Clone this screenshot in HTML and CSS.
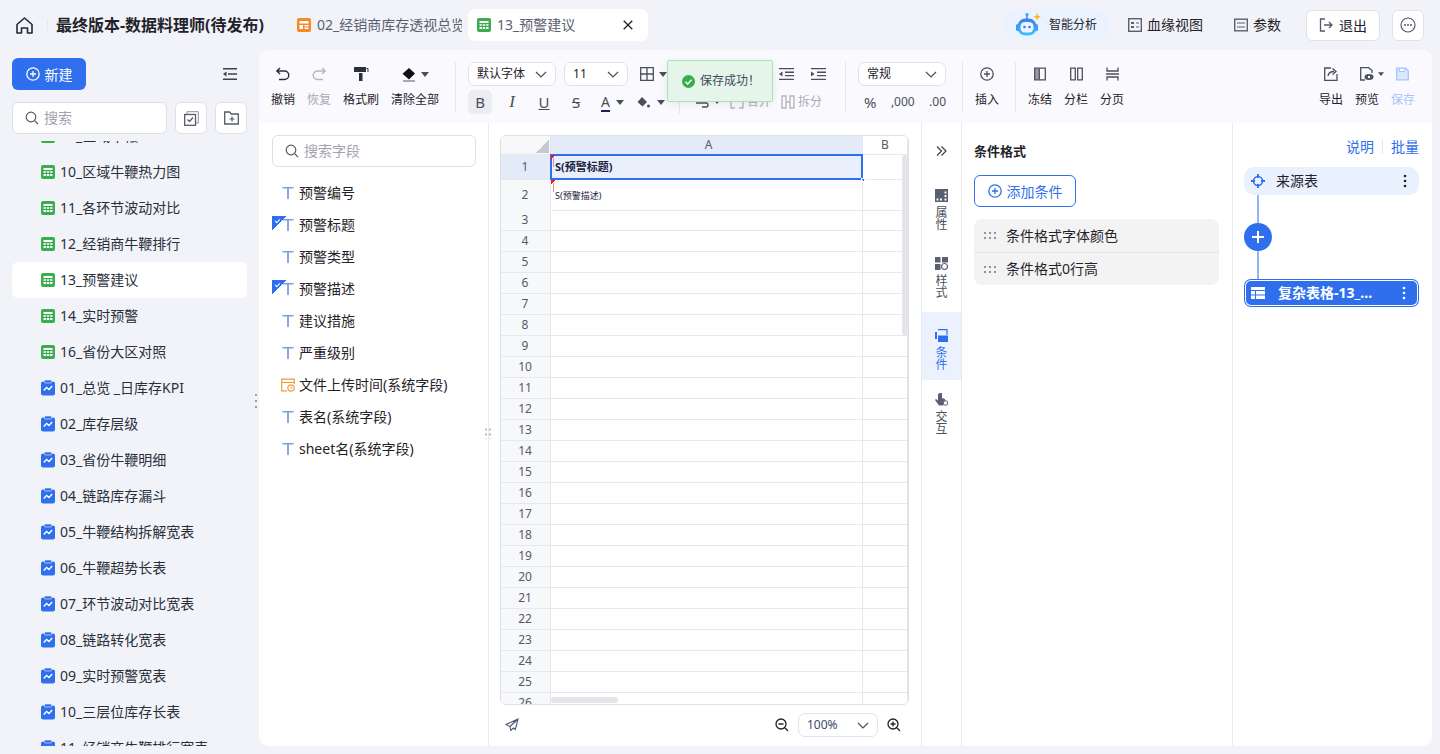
FILE: index.html
```html
<!DOCTYPE html>
<html lang="en">
<head>
    <meta charset="UTF-8">
    <meta name="viewport" content="width=device-width, initial-scale=1.0">
    <title>13_预警建议</title>
    <link rel="stylesheet" href="styles.css">
</head>
<body>

<svg class="defs" width="0" height="0">
    <symbol id="i-sheet" viewBox="0 0 14 14">
        <rect width="14" height="14" rx="2" fill="#3aad4f"/>
        <path d="M2.5 3h9v2h-9zM2.5 6.2h2.4v1.6H2.5zM5.8 6.2h2.4v1.6H5.8zM9.1 6.2h2.4v1.6H9.1zM2.5 9h2.4v2H2.5zM5.8 9h2.4v2H5.8zM9.1 9h2.4v2H9.1z" fill="#fff"/>
    </symbol>
    <symbol id="i-dash" viewBox="0 0 14 16">
        <rect y="1.5" width="14" height="14" rx="2" fill="#2f6fed"/>
        <rect x="3.5" y="0" width="7" height="3" rx="1" fill="#2f6fed" stroke="#f1f3f9" stroke-width=".6"/>
        <path d="M2.8 10.5l2.8-3 2.4 2 3.2-3.4" fill="none" stroke="#fff" stroke-width="1.4"/>
    </symbol>
    <symbol id="i-t" viewBox="0 0 12 14">
        <path d="M.5 1h11v1.6h-4.6V13H5.100V2.600H.5z" fill="#7f9fdc"/>
    </symbol>
    <symbol id="i-caret" viewBox="0 0 8 5">
        <path d="M0 0h8L4 5z" fill="#4b4f5c"/>
    </symbol>
    <symbol id="i-chev" viewBox="0 0 12 7">
        <path d="M1 1l5 5 5-5" fill="none" stroke="#4b4f5c" stroke-width="1.2"/>
    </symbol>
    <symbol id="i-search" viewBox="0 0 14 14">
        <circle cx="6" cy="6" r="4.800" fill="none" stroke="#555b66" stroke-width="1.200"/>
        <path d="M9.600 9.600l3.400 3.400" stroke="#555b66" stroke-width="1.200"/>
    </symbol>
    <symbol id="i-kebab" viewBox="0 0 4 14">
        <circle cx="2" cy="2" r="1.300"/><circle cx="2" cy="7" r="1.300"/><circle cx="2" cy="12" r="1.300"/>
    </symbol>
    <symbol id="i-plus-circle" viewBox="0 0 14 14">
        <circle cx="7" cy="7" r="6.200" fill="none" stroke="currentColor" stroke-width="1.300"/>
        <path d="M7 4v6M4 7h6" stroke="currentColor" stroke-width="1.300"/>
    </symbol>
    <symbol id="i-grip" viewBox="0 0 12 7">
        <path d="M0 0h2v2H0zM5 0h2v2H5zM10 0h2v2h-2zM0 5h2v2H0zM5 5h2v2H5zM10 5h2v2h-2z" fill="#8d93a0"/>
    </symbol>
</svg>

<div class="app">

    <!-- top bar -->
    <header class="topbar">
        <svg class="home-icon" width="17" height="17" viewBox="0 0 17 17"><path d="M1 7.500L8.500 1 16 7.500V16h-4.500v-5h-6v5H1z" fill="none" stroke="#1f2937" stroke-width="1.600" stroke-linejoin="round"/></svg>
        <span class="top-sep"></span>
        <h1 class="doc-title">最终版本-数据料理师(待发布)</h1>
        <div class="tab">
            <svg width="14" height="14" viewBox="0 0 14 14"><rect width="14" height="14" rx="2" fill="#f58a25"/><path d="M2.500 3h9v2.500h-9zM2.500 7h3.500v4h-3.500zM7.500 7h4v1.500h-4zM7.500 9.500h4V11h-4z" fill="#fff"/></svg>
            <span class="tab-text">02_经销商库存透视总览</span>
        </div>
        <div class="tab tab-active">
            <svg width="14" height="14"><use href="#i-sheet"/></svg>
            <span class="tab-text">13_预警建议</span>
            <svg class="tab-close" width="10" height="10" viewBox="0 0 10 10"><path d="M.7.7l8.600 8.600M9.300.7L.7 9.300" stroke="#1f2329" stroke-width="1.300"/></svg>
        </div>
        <div class="top-actions">
            <div class="ai-pill">
                <svg width="28" height="26" viewBox="0 0 28 26">
                    <defs><linearGradient id="robot" x1="0" y1="0" x2="0" y2="1"><stop offset="0" stop-color="#3d7bf5"/><stop offset="1" stop-color="#35c8f8"/></linearGradient></defs>
                    <path d="M17 1.500l1.200 2.800 2.800 1-2.800 1.200L17 9l-1-2.500-2.700-1.200 2.700-1z" transform="translate(4 -.5)" fill="#f7b733"/>
                    <path d="M11 7V3" stroke="#3d7bf5" stroke-width="1.400"/>
                    <circle cx="11" cy="2.500" r="1.600" fill="#35a5f8"/>
                    <rect x="0" y="12" width="3" height="7" rx="1.500" fill="#3d9bf5"/>
                    <rect x="19" y="12" width="3" height="7" rx="1.500" fill="#3d9bf5"/>
                    <rect x="1.500" y="6.500" width="19" height="17" rx="8" fill="url(#robot)"/>
                    <rect x="4.500" y="10" width="13" height="10.500" rx="4.500" fill="#eef4ff"/>
                    <circle cx="8.500" cy="15" r="1.300" fill="#3d7bf5"/>
                    <circle cx="13.500" cy="15" r="1.300" fill="#3d7bf5"/>
                </svg>
                <span>智能分析</span>
            </div>
            <div class="top-link link-lineage">
                <svg width="14" height="14" viewBox="0 0 14 14"><rect x=".7" y=".7" width="12.600" height="12.600" fill="none" stroke="#5b6070" stroke-width="1.400"/><path d="M3 4h3v2H3zM3 8h3v2H3zM8 4.500h3v1H8zM8 8.500h3v1H8z" fill="#5b6070"/></svg>
                <span>血缘视图</span>
            </div>
            <div class="top-link link-param">
                <svg width="14" height="14" viewBox="0 0 14 14"><rect x=".7" y="1.200" width="12.600" height="11.600" fill="none" stroke="#5b6070" stroke-width="1.400"/><path d="M3 4.500h8v1H3zM3 8.500h8v1H3z" fill="#5b6070"/></svg>
                <span>参数</span>
            </div>
            <button class="top-btn btn-exit">
                <svg width="14" height="14" viewBox="0 0 14 14"><path d="M6 1H1.500v12H6M5 7h8M10 4l3 3-3 3" fill="none" stroke="#555b66" stroke-width="1.300"/></svg>
                退出
            </button>
            <button class="top-btn btn-more">
                <svg width="16" height="16" viewBox="0 0 16 16"><circle cx="8" cy="8" r="7" fill="none" stroke="#555b66" stroke-width="1.200"/><circle cx="5" cy="8" r="1" fill="#555b66"/><circle cx="8" cy="8" r="1" fill="#555b66"/><circle cx="11" cy="8" r="1" fill="#555b66"/></svg>
            </button>
        </div>
    </header>

    <div class="workspace">

        <!-- left tree -->
        <aside class="sidebar">
            <div class="side-head">
                <button class="new-btn">
                    <svg width="14" height="14"><use href="#i-plus-circle"/></svg>
                    新建
                </button>
                <svg width="14" height="12" viewBox="0 0 14 12"><path d="M0 0h14v1.600H0zM5 5.200h9v1.600H5zM0 10.400h14V12H0zM3.500 3.500v5L0 6z" fill="#3a3f4b"/></svg>
            </div>
            <div class="side-tools">
                <div class="search-box side-search">
                    <svg width="14" height="14"><use href="#i-search"/></svg>
                    <span>搜索</span>
                </div>
                <button class="square-btn">
                    <svg width="15" height="15" viewBox="0 0 15 15"><path d="M3 3V.7h11.300V12H12" fill="none" stroke="#8d93a0" stroke-width="1"/><rect x=".7" y="3.500" width="10.800" height="10.800" fill="none" stroke="#555b66" stroke-width="1.300"/><path d="M3.500 8.500l2 2 3.500-4" fill="none" stroke="#555b66" stroke-width="1.300"/></svg>
                </button>
                <button class="square-btn">
                    <svg width="15" height="14" viewBox="0 0 15 14"><path d="M.7 1h5l1.500 2h7.100v10H.7z" fill="none" stroke="#555b66" stroke-width="1.300"/><path d="M8 5.500v5M5.500 8h5" stroke="#555b66" stroke-width="1.200"/></svg>
                </button>
            </div>
            <div class="tree-clip">
                <ul class="tree">
                    <li class="tree-item"><svg width="14" height="14"><use href="#i-sheet"/></svg>09_区域牛鞭</li>
                    <li class="tree-item"><svg width="14" height="14"><use href="#i-sheet"/></svg>10_区域牛鞭热力图</li>
                    <li class="tree-item"><svg width="14" height="14"><use href="#i-sheet"/></svg>11_各环节波动对比</li>
                    <li class="tree-item"><svg width="14" height="14"><use href="#i-sheet"/></svg>12_经销商牛鞭排行</li>
                    <li class="tree-item tree-item-active"><svg width="14" height="14"><use href="#i-sheet"/></svg>13_预警建议</li>
                    <li class="tree-item"><svg width="14" height="14"><use href="#i-sheet"/></svg>14_实时预警</li>
                    <li class="tree-item"><svg width="14" height="14"><use href="#i-sheet"/></svg>16_省份大区对照</li>
                    <li class="tree-item"><svg width="14" height="16"><use href="#i-dash"/></svg>01_总览 _日库存KPI</li>
                    <li class="tree-item"><svg width="14" height="16"><use href="#i-dash"/></svg>02_库存层级</li>
                    <li class="tree-item"><svg width="14" height="16"><use href="#i-dash"/></svg>03_省份牛鞭明细</li>
                    <li class="tree-item"><svg width="14" height="16"><use href="#i-dash"/></svg>04_链路库存漏斗</li>
                    <li class="tree-item"><svg width="14" height="16"><use href="#i-dash"/></svg>05_牛鞭结构拆解宽表</li>
                    <li class="tree-item"><svg width="14" height="16"><use href="#i-dash"/></svg>06_牛鞭超势长表</li>
                    <li class="tree-item"><svg width="14" height="16"><use href="#i-dash"/></svg>07_环节波动对比宽表</li>
                    <li class="tree-item"><svg width="14" height="16"><use href="#i-dash"/></svg>08_链路转化宽表</li>
                    <li class="tree-item"><svg width="14" height="16"><use href="#i-dash"/></svg>09_实时预警宽表</li>
                    <li class="tree-item"><svg width="14" height="16"><use href="#i-dash"/></svg>10_三层位库存长表</li>
                    <li class="tree-item"><svg width="14" height="16"><use href="#i-dash"/></svg>11_经销商牛鞭排行宽表</li>
                </ul>
            </div>
            <span class="side-grip"></span>
        </aside>

        <main class="editor">

            <!-- toolbar -->
            <div class="toolbar">
                <div class="tool-group">
                    <div class="tool">
                        <svg width="16" height="16" viewBox="0 0 16 16"><path d="M5 2L1.800 5 5 8M2 5h7.500a4 4 0 0 1 0 8.500H4" fill="none" stroke="#2a2f3a" stroke-width="1.400"/></svg>
                        <span>撤销</span>
                    </div>
                    <div class="tool tool-off">
                        <svg width="16" height="16" viewBox="0 0 16 16"><path d="M11 2l3.200 3L11 8M14 5H6.500a4 4 0 0 0 0 8.500H12" fill="none" stroke="#b4b7bf" stroke-width="1.400"/></svg>
                        <span>恢复</span>
                    </div>
                    <div class="tool">
                        <svg width="16" height="16" viewBox="0 0 16 16"><path d="M1 1h12v5H1zM6 7h3.500v8H6z" fill="#2a2f3a"/><path d="M13.500 2.500H15V6" fill="none" stroke="#2a2f3a"/></svg>
                        <span>格式刷</span>
                    </div>
                    <div class="tool">
                        <span class="tool-icon-row">
                            <svg width="16" height="15" viewBox="0 0 16 15"><path d="M8 1l6 5.500-6 6-6.500-5.800z" fill="#111"/><path d="M2 14h12" stroke="#555b66" stroke-width="1"/></svg>
                            <svg width="8" height="5"><use href="#i-caret"/></svg>
                        </span>
                        <span>清除全部</span>
                    </div>
                </div>
                <span class="tool-sep"></span>

                <div class="format-group">
                    <div class="format-row">
                        <div class="select font-select"><span>默认字体</span><svg width="12" height="7"><use href="#i-chev"/></svg></div>
                        <div class="select size-select"><span>11</span><svg width="12" height="7"><use href="#i-chev"/></svg></div>
                        <div class="icon-caret border-tool">
                            <svg width="14" height="14" viewBox="0 0 14 14"><path d="M.7.7h12.600v12.600H.7zM7 .7v12.600M.7 7h12.600" fill="none" stroke="#4b4f5c" stroke-width="1.300"/></svg>
                            <svg width="8" height="5"><use href="#i-caret"/></svg>
                        </div>
                        <div class="indent-tools">
                            <svg width="15" height="12" viewBox="0 0 15 12"><path d="M0 0h15v1.300H0zM6 3.600h9v1.300H6zM6 7h9v1.300H6zM0 10.700h15V12H0zM3.500 3.500v5L0 6z" fill="#4b4f5c"/></svg>
                            <svg width="15" height="12" viewBox="0 0 15 12"><path d="M0 0h15v1.300H0zM6 3.600h9v1.300H6zM6 7h9v1.300H6zM0 10.700h15V12H0zM0 3.500v5L3.500 6z" fill="#4b4f5c"/></svg>
                        </div>
                    </div>
                    <div class="format-row">
                        <span class="fmt-btn fmt-on fmt-b">B</span>
                        <span class="fmt-btn fmt-i">I</span>
                        <span class="fmt-btn fmt-u">U</span>
                        <span class="fmt-btn fmt-s">S</span>
                        <div class="icon-caret color-tool">
                            <span class="fmt-a">A</span>
                            <svg width="8" height="5"><use href="#i-caret"/></svg>
                        </div>
                        <div class="icon-caret fill-tool">
                            <svg width="14" height="13" viewBox="0 0 14 13"><path d="M6 1l5 5-4.500 4.500L1.500 6z" fill="#4b4f5c"/><circle cx="12.500" cy="10" r="1.500" fill="#4b4f5c"/></svg>
                            <svg width="8" height="5"><use href="#i-caret"/></svg>
                        </div>
                        <span class="row-sep"></span>
                        <div class="icon-caret wrap-tool">
                            <svg width="14" height="12" viewBox="0 0 14 12"><path d="M0 7h10a2 2 0 0 1 0 4H6M0 3h14" fill="none" stroke="#4b4f5c" stroke-width="1.300"/></svg>
                            <svg width="6" height="4"><use href="#i-caret"/></svg>
                        </div>
                        <div class="text-tool">
                            <svg width="14" height="14" viewBox="0 0 14 14"><path d="M5 1H1v12h4M9 1h4v12H9" fill="none" stroke="#b4b7bf" stroke-width="1.400"/></svg>
                            <span>合并</span>
                        </div>
                        <div class="text-tool">
                            <svg width="14" height="14" viewBox="0 0 14 14"><path d="M1 1h4v12H1zM9 1h4v12H9zM5 7h4" fill="none" stroke="#b4b7bf" stroke-width="1.400"/></svg>
                            <span>拆分</span>
                        </div>
                    </div>
                </div>
                <span class="tool-sep"></span>

                <div class="format-group number-group">
                    <div class="select number-select"><span>常规</span><svg width="12" height="7"><use href="#i-chev"/></svg></div>
                    <div class="number-row">
                        <span class="num-percent">%</span>
                        <span>,000</span>
                        <span>.00</span>
                    </div>
                </div>
                <span class="tool-sep"></span>

                <div class="tool-group">
                    <div class="tool">
                        <svg width="14" height="14" viewBox="0 0 14 14" color="#4b4f5c"><use href="#i-plus-circle"/></svg>
                        <span>插入</span>
                    </div>
                </div>
                <span class="tool-sep"></span>

                <div class="tool-group">
                    <div class="tool">
                        <svg width="12" height="13" viewBox="0 0 12 13"><path d="M.7.7h10.600v11.600H.7z" fill="none" stroke="#4b4f5c" stroke-width="1.300"/><path d="M1 1h4v11H1z" fill="#4b4f5c" opacity=".55"/><path d="M5.300 1v11" stroke="#4b4f5c" stroke-width="1.300"/></svg>
                        <span>冻结</span>
                    </div>
                    <div class="tool">
                        <svg width="13" height="13" viewBox="0 0 13 13"><path d="M.7.7h4.600v11.600H.7zM7.700.7h4.600v11.600H7.700z" fill="none" stroke="#4b4f5c" stroke-width="1.300"/></svg>
                        <span>分栏</span>
                    </div>
                    <div class="tool">
                        <svg width="13" height="13" viewBox="0 0 13 13"><path d="M1 0v3.500h11V0M1 13V9.500h11V13M0 6.500h13" fill="none" stroke="#4b4f5c" stroke-width="1.300"/></svg>
                        <span>分页</span>
                    </div>
                </div>

                <div class="tool-group tool-group-end">
                    <div class="tool">
                        <svg width="14" height="14" viewBox="0 0 14 14"><path d="M7 1H.7v12.300H13V7" fill="none" stroke="#4b4f5c" stroke-width="1.300"/><path d="M4 9c.5-3 3-4.500 6-4.500M8.500 1.500l3.500 3-3.500 3" fill="none" stroke="#4b4f5c" stroke-width="1.300"/></svg>
                        <span>导出</span>
                    </div>
                    <div class="tool preview-tool">
                        <span class="tool-icon-row">
                            <svg width="14" height="14" viewBox="0 0 14 14"><path d="M5 13H.7V.7h8L12 3.500V6" fill="none" stroke="#4b4f5c" stroke-width="1.300"/><ellipse cx="9" cy="10" rx="4.500" ry="3" fill="#4b4f5c"/><circle cx="9" cy="10" r="1.200" fill="#fff"/></svg>
                            <svg width="6" height="4"><use href="#i-caret"/></svg>
                        </span>
                        <span>预览</span>
                    </div>
                    <div class="tool tool-save">
                        <svg width="13" height="13" viewBox="0 0 13 13"><path d="M.7.7h9l2.600 2.600v9H.7z" fill="#dbe7fd" stroke="#a8c4f8" stroke-width="1.300"/><path d="M3.500 1h5v3h-5z" fill="#fff" stroke="#a8c4f8"/></svg>
                        <span>保存</span>
                    </div>
                </div>
            </div>

            <div class="editor-body">

                <!-- field list -->
                <section class="fields">
                    <div class="search-box field-search">
                        <svg width="14" height="14"><use href="#i-search"/></svg>
                        <span>搜索字段</span>
                    </div>
                    <ul class="field-list">
                        <li class="field"><svg width="12" height="14"><use href="#i-t"/></svg>预警编号</li>
                        <li class="field field-used"><svg width="12" height="14"><use href="#i-t"/></svg>预警标题</li>
                        <li class="field"><svg width="12" height="14"><use href="#i-t"/></svg>预警类型</li>
                        <li class="field field-used"><svg width="12" height="14"><use href="#i-t"/></svg>预警描述</li>
                        <li class="field"><svg width="12" height="14"><use href="#i-t"/></svg>建议措施</li>
                        <li class="field"><svg width="12" height="14"><use href="#i-t"/></svg>严重级别</li>
                        <li class="field field-date">
                            <svg width="14" height="14" viewBox="0 0 14 14"><path d="M6 12.800H.7V1.200h12.600V6M.7 4.500h12.600" fill="none" stroke="#f59a3c" stroke-width="1.200"/><circle cx="10" cy="10" r="3.200" fill="none" stroke="#f59a3c" stroke-width="1.200"/><path d="M10 8.500V10h1.500" fill="none" stroke="#f59a3c"/></svg>
                            文件上传时间(系统字段)
                        </li>
                        <li class="field"><svg width="12" height="14"><use href="#i-t"/></svg>表名(系统字段)</li>
                        <li class="field"><svg width="12" height="14"><use href="#i-t"/></svg>sheet名(系统字段)</li>
                    </ul>
                    <span class="panel-grip"></span>
                </section>

                <!-- sheet -->
                <section class="sheet-area">
                    <div class="sheet">
                        <div class="sheet-row sheet-head">
                            <div class="row-no corner"></div>
                            <div class="col-a col-on">A</div>
                            <div class="col-b">B</div>
                        </div>
                        <div class="sheet-row row-1">
                            <div class="row-no row-no-on">1</div>
                            <div class="col-a cell-selected"><i class="cell-mark"></i><span class="cell-title">S(预警标题)</span></div>
                            <div class="col-b"></div>
                        </div>
                        <div class="sheet-row row-2">
                            <div class="row-no">2</div>
                            <div class="col-a"><i class="cell-mark"></i><span class="cell-desc">S(预警描述)</span></div>
                            <div class="col-b"></div>
                        </div>
                        <div class="sheet-row"><div class="row-no">3</div><div class="col-a"></div><div class="col-b"></div></div>
                        <div class="sheet-row"><div class="row-no">4</div><div class="col-a"></div><div class="col-b"></div></div>
                        <div class="sheet-row"><div class="row-no">5</div><div class="col-a"></div><div class="col-b"></div></div>
                        <div class="sheet-row"><div class="row-no">6</div><div class="col-a"></div><div class="col-b"></div></div>
                        <div class="sheet-row"><div class="row-no">7</div><div class="col-a"></div><div class="col-b"></div></div>
                        <div class="sheet-row"><div class="row-no">8</div><div class="col-a"></div><div class="col-b"></div></div>
                        <div class="sheet-row"><div class="row-no">9</div><div class="col-a"></div><div class="col-b"></div></div>
                        <div class="sheet-row"><div class="row-no">10</div><div class="col-a"></div><div class="col-b"></div></div>
                        <div class="sheet-row"><div class="row-no">11</div><div class="col-a"></div><div class="col-b"></div></div>
                        <div class="sheet-row"><div class="row-no">12</div><div class="col-a"></div><div class="col-b"></div></div>
                        <div class="sheet-row"><div class="row-no">13</div><div class="col-a"></div><div class="col-b"></div></div>
                        <div class="sheet-row"><div class="row-no">14</div><div class="col-a"></div><div class="col-b"></div></div>
                        <div class="sheet-row"><div class="row-no">15</div><div class="col-a"></div><div class="col-b"></div></div>
                        <div class="sheet-row"><div class="row-no">16</div><div class="col-a"></div><div class="col-b"></div></div>
                        <div class="sheet-row"><div class="row-no">17</div><div class="col-a"></div><div class="col-b"></div></div>
                        <div class="sheet-row"><div class="row-no">18</div><div class="col-a"></div><div class="col-b"></div></div>
                        <div class="sheet-row"><div class="row-no">19</div><div class="col-a"></div><div class="col-b"></div></div>
                        <div class="sheet-row"><div class="row-no">20</div><div class="col-a"></div><div class="col-b"></div></div>
                        <div class="sheet-row"><div class="row-no">21</div><div class="col-a"></div><div class="col-b"></div></div>
                        <div class="sheet-row"><div class="row-no">22</div><div class="col-a"></div><div class="col-b"></div></div>
                        <div class="sheet-row"><div class="row-no">23</div><div class="col-a"></div><div class="col-b"></div></div>
                        <div class="sheet-row"><div class="row-no">24</div><div class="col-a"></div><div class="col-b"></div></div>
                        <div class="sheet-row"><div class="row-no">25</div><div class="col-a"></div><div class="col-b"></div></div>
                        <div class="sheet-row"><div class="row-no">26</div><div class="col-a"></div><div class="col-b"></div></div>
                        <span class="scroll-v"></span>
                        <span class="scroll-h"></span>
                    </div>
                    <div class="sheet-foot">
                        <svg width="14" height="14" viewBox="0 0 14 14"><path d="M13 1L1 6.500l4 2 .8 4 2.500-2.500 2 1.500zM13 1L5 8.500" fill="none" stroke="#4a5578" stroke-width="1.100"/></svg>
                        <div class="zoom-ctrl">
                            <svg width="14" height="14" viewBox="0 0 14 14"><circle cx="6" cy="6" r="5" fill="none" stroke="#1f2329" stroke-width="1.300"/><path d="M9.800 9.800L13 13M3.500 6h5" stroke="#1f2329" stroke-width="1.300"/></svg>
                            <div class="select zoom-select"><span>100%</span><svg width="12" height="7"><use href="#i-chev"/></svg></div>
                            <svg width="14" height="14" viewBox="0 0 14 14"><circle cx="6" cy="6" r="5" fill="none" stroke="#1f2329" stroke-width="1.300"/><path d="M9.800 9.800L13 13M3.500 6h5M6 3.500v5" stroke="#1f2329" stroke-width="1.300"/></svg>
                        </div>
                    </div>
                </section>

                <!-- vertical tabs -->
                <nav class="side-tabs">
                    <svg class="expand-icon" width="11" height="10" viewBox="0 0 11 10"><path d="M1 .5L5.500 5 1 9.500M5.500.5L10 5 5.500 9.500" fill="none" stroke="#3a3f4b" stroke-width="1.200"/></svg>
                    <div class="side-tab">
                        <svg width="13" height="13" viewBox="0 0 13 13"><path d="M0 0h13v13H0z" fill="#5b6070"/><path d="M9.500 2.500h2v2h-2zM9.500 6h2v2h-2zM1.500 9.500h2v2h-2zM5 9.500h2v2H5zM9.500 9.500h2v2h-2z" fill="#fff"/></svg>
                        <span>属<br>性</span>
                    </div>
                    <div class="side-tab">
                        <svg width="13" height="13" viewBox="0 0 13 13"><path d="M0 0h5.500v5.500H0zM7 0h6v5.500H7zM0 7h5.500v6H0z" fill="#5b6070"/><circle cx="9.500" cy="9.500" r="3" fill="#fff" stroke="#5b6070" stroke-width="1.200"/></svg>
                        <span>样<br>式</span>
                    </div>
                    <div class="side-tab side-tab-on">
                        <svg width="13" height="13" viewBox="0 0 13 13"><path d="M3 .7h9v5" fill="none" stroke="#2f6fed" stroke-width="1.200"/><path d="M0 3h2v7H0z" fill="#2f6fed"/><path d="M3 6.500h10V13H3z" fill="#2f6fed"/></svg>
                        <span>条<br>件</span>
                    </div>
                    <div class="side-tab">
                        <svg width="13" height="13" viewBox="0 0 13 13"><path d="M5 0h2v5l3 1v3l-2 3.500H4L0 7l1-1 2 1.500V1z" fill="#5b6070"/><circle cx="10.500" cy="10" r="2.300" fill="#fff" stroke="#5b6070"/></svg>
                        <span>交<br>互</span>
                    </div>
                </nav>

                <!-- conditional format -->
                <section class="cond-panel">
                    <h2 class="cond-title">条件格式</h2>
                    <button class="add-cond">
                        <svg width="14" height="14"><use href="#i-plus-circle"/></svg>
                        添加条件
                    </button>
                    <ul class="cond-list">
                        <li class="cond-item"><svg width="12" height="7"><use href="#i-grip"/></svg>条件格式字体颜色</li>
                        <li class="cond-item"><svg width="12" height="7"><use href="#i-grip"/></svg>条件格式0行高</li>
                    </ul>
                </section>

                <!-- data flow -->
                <section class="flow-panel">
                    <div class="flow-links"><a>说明</a><span class="flow-links-sep"></span><a>批量</a></div>
                    <div class="flow-node node-source">
                        <svg width="14" height="14" viewBox="0 0 14 14"><circle cx="7" cy="7" r="4.500" fill="none" stroke="#2f6fed" stroke-width="1.500"/><path d="M7 0v4M7 10v4M0 7h4M10 7h4" stroke="#2f6fed" stroke-width="1.800"/></svg>
                        <span class="node-label">来源表</span>
                        <svg class="node-menu" width="4" height="14" fill="#1f2329"><use href="#i-kebab"/></svg>
                    </div>
                    <span class="flow-line"></span>
                    <span class="flow-add"><svg width="14" height="14" viewBox="0 0 14 14"><path d="M7 1v12M1 7h12" stroke="#fff" stroke-width="2"/></svg></span>
                    <span class="flow-line flow-line-short"></span>
                    <div class="flow-node node-table">
                        <svg width="14" height="12" viewBox="0 0 14 12"><path d="M0 0h14v3H0zM0 4h4v3.500H0zM5 4h9v3.500H5zM0 8.500h4V12H0zM5 8.500h9V12H5z" fill="#fff"/></svg>
                        <span class="node-label">复杂表格-13_…</span>
                        <svg class="node-menu" width="4" height="14" fill="#fff"><use href="#i-kebab"/></svg>
                    </div>
                </section>
            </div>
        </main>
    </div>

    <!-- toast sits over the toolbar -->
    <div class="toast">
        <svg width="13" height="13" viewBox="0 0 13 13"><circle cx="6.500" cy="6.500" r="6.500" fill="#35ae4f"/><path d="M3.500 6.800l2.200 2.200 3.800-4.200" fill="none" stroke="#fff" stroke-width="1.400"/></svg>
        <span>保存成功！</span>
    </div>
</div>

</body>
</html>
```

FILE: styles.css
```css
* {
    box-sizing: border-box;
}

body, html {
    margin: 0;
    padding: 0;
    width: 100%;
    height: 100%;
    overflow: hidden;
    background-color: #f1f3f9;
    font-family: "Noto Sans", "Noto Sans CJK SC", sans-serif;
    font-size: 14px;
    color: #1f2329;
}

ul {
    list-style: none;
    margin: 0;
    padding: 0;
}

button {
    font: inherit;
    color: inherit;
    cursor: pointer;
}

svg {
    display: block;
    flex: none;
}

.defs {
    position: absolute;
}

.app {
    position: relative;
    height: 754px;
    overflow: hidden;
}

/* top bar */
.topbar {
    height: 50px;
    display: flex;
    align-items: center;
    padding: 0 16px;
}

.home-icon {
    margin-right: 14px;
}

.top-sep {
    width: 1px;
    height: 12px;
    background: #e6e8ef;
    margin-right: 8px;
}

.doc-title {
    margin: 0;
    font-size: 16px;
    font-weight: 700;
    line-height: 22px;
    width: 233px;
    white-space: nowrap;
}

.tab {
    width: 179px;
    height: 32px;
    display: flex;
    align-items: center;
    gap: 6px;
    padding-left: 8px;
    border-radius: 7px;
    color: #5b6070;
    overflow: hidden;
    white-space: nowrap;
}

.tab-text {
    line-height: 20px;
    overflow: hidden;
    max-width: 145px;
}

.tab-active {
    background: #fff;
    width: 180px;
    margin-left: 0;
    padding-left: 9px;
}

.tab-close {
    margin-left: auto;
    margin-right: 15px;
}

.top-actions {
    margin-left: auto;
    display: flex;
    align-items: center;
}

.ai-pill {
    width: 106px;
    height: 32px;
    border-radius: 16px;
    background: #eaf2ff;
    display: flex;
    align-items: center;
    gap: 5px;
    padding-left: 12px;
    font-size: 12px;
    line-height: 16px;
}

.top-link {
    display: flex;
    align-items: center;
    gap: 5px;
    line-height: 20px;
    font-size: 14px;
}

.link-lineage {
    margin-left: 18px;
}

.link-param {
    margin-left: 31px;
}

.top-btn {
    height: 31px;
    display: flex;
    align-items: center;
    justify-content: center;
    background: #fff;
    border: 1px solid #dfe2ea;
    border-radius: 6px;
    padding: 0;
}

.btn-exit {
    width: 74px;
    gap: 6px;
    margin-left: 25px;
}

.btn-more {
    width: 32px;
    margin-left: 12px;
}

/* layout */
.workspace {
    height: 696px;
    display: flex;
}

.sidebar {
    position: relative;
    width: 259px;
    flex: none;
    padding: 8px 12px 0;
    display: flex;
    flex-direction: column;
    height: 696px;
}

.side-head {
    display: flex;
    align-items: center;
    justify-content: space-between;
    padding-right: 10px;
}

.new-btn {
    width: 74px;
    height: 32px;
    background: #2f6fed;
    color: #fff;
    border: none;
    border-radius: 6px;
    display: flex;
    align-items: center;
    justify-content: center;
    gap: 5px;
}

.side-tools {
    display: flex;
    gap: 8px;
    margin-top: 12px;
}

.search-box {
    height: 32px;
    display: flex;
    align-items: center;
    gap: 5px;
    padding-left: 12px;
    background: #fff;
    border: 1px solid #dcdfe6;
    border-radius: 6px;
    color: #a0a4ae;
    line-height: 20px;
}

.side-search {
    width: 155px;
}

.square-btn {
    width: 32px;
    height: 32px;
    display: flex;
    align-items: center;
    justify-content: center;
    background: #fff;
    border: 1px solid #dfe2ea;
    border-radius: 6px;
    padding: 0;
}

.tree-clip {
    margin-top: 7px;
    flex: 1;
    overflow: hidden;
}

.tree {
    margin-top: -23px;
}

.tree-item {
    height: 36px;
    display: flex;
    align-items: center;
    gap: 5px;
    padding-left: 29px;
    line-height: 20px;
    border-radius: 6px;
    white-space: nowrap;
    color: #2a2f3a;
}

.tree-item-active {
    background: #fff;
}

.side-grip {
    position: absolute;
    left: 255px;
    top: 344px;
    width: 2px;
    height: 14px;
    background: repeating-linear-gradient(#9a9ea8 0 2px, transparent 2px 6px);
}

.editor {
    width: 1173px;
    background: #fff;
    border-radius: 10px;
    overflow: hidden;
    display: flex;
    flex-direction: column;
}

/* toolbar */
.toolbar {
    height: 73px;
    flex: none;
    display: flex;
    align-items: flex-start;
    padding: 12px 17px 0 12px;
    background: #fafafe;
}

.tool-group {
    display: flex;
    gap: 12px;
}

.tool-group-end {
    margin-left: auto;
}

.tool {
    display: flex;
    flex-direction: column;
    align-items: center;
    height: 50px;
    font-size: 12px;
    line-height: 16px;
    white-space: nowrap;
}

.tool > svg,
.tool-icon-row {
    height: 24px;
    margin-bottom: 6px;
    flex: none;
}

.tool-icon-row {
    display: flex;
    align-items: center;
    gap: 4px;
}

.tool > svg {
    padding: 4px 0;
    box-sizing: content-box;
    height: 16px;
}

.tool-off {
    color: #a8abb4;
}

.tool-save {
    color: #a8c4f8;
}

.preview-tool .tool-icon-row {
    margin-right: -10px;
}

.tool-sep {
    width: 1px;
    height: 50px;
    background: #e4e6ec;
    margin: 0 12px 0 16px;
    flex: none;
}

.format-group {
    display: flex;
    flex-direction: column;
    gap: 4px;
    width: 361px;
}

.format-row {
    height: 24px;
    display: flex;
    align-items: center;
    gap: 8px;
}

.select {
    height: 24px;
    display: flex;
    align-items: center;
    justify-content: space-between;
    padding: 0 8px;
    background: #fff;
    border: 1px solid #dfe2ea;
    border-radius: 7px;
    font-size: 12px;
    line-height: 16px;
}

.font-select {
    width: 88px;
}

.size-select {
    width: 64px;
}

.icon-caret {
    display: flex;
    align-items: center;
    gap: 5px;
    flex: none;
}

.border-tool {
    margin-left: 4px;
}

.indent-tools {
    margin-left: auto;
    display: flex;
    gap: 17px;
    padding-right: 3px;
}

.fmt-btn {
    width: 24px;
    height: 24px;
    display: flex;
    align-items: center;
    justify-content: center;
    font-size: 15px;
    line-height: 24px;
    color: #4b4f5c;
}

.fmt-on {
    background: #ebedf2;
    border-radius: 5px;
}

.fmt-i {
    font-style: italic;
    font-family: "Liberation Serif", serif;
    font-size: 17px;
}

.fmt-u {
    text-decoration: underline;
}

.fmt-s {
    text-decoration: line-through;
}

.color-tool {
    margin-left: 5px;
    gap: 6px;
}

.fmt-a {
    font-size: 14px;
    line-height: 17px;
    border-bottom: 2px solid #1c2550;
    color: #4b4f5c;
}

.fill-tool {
    margin-left: 4px;
    gap: 7px;
}

.row-sep {
    width: 1px;
    height: 24px;
    background: #e4e6ec;
    margin-left: 6px;
}

.wrap-tool {
    margin-left: 8px;
    gap: 4px;
}

.text-tool {
    display: flex;
    align-items: center;
    gap: 3px;
    font-size: 12px;
    color: #a8abb4;
    line-height: 16px;
    margin-left: 2px;
}

.number-group {
    width: 88px;
}

.number-select {
    width: 88px;
}

.number-row {
    height: 24px;
    display: flex;
    align-items: center;
    justify-content: space-between;
    padding: 0 0 0 6px;
    font-size: 12px;
    color: #4b4f5c;
    line-height: 16px;
}

.num-percent {
    font-size: 15px;
}

/* editor body */
.editor-body {
    flex: 1;
    display: flex;
    min-height: 0;
}

.fields {
    position: relative;
    width: 230px;
    flex: none;
    padding: 12px 12px 0 13px;
    border-right: 1px solid #e8eaf0;
}

.field-search {
    width: 204px;
    color: #a0a4ae;
}

.field-list {
    margin-top: 10px;
}

.field {
    position: relative;
    height: 32px;
    display: flex;
    align-items: center;
    gap: 5px;
    padding-left: 10px;
    line-height: 20px;
    white-space: nowrap;
}

.field-date {
    padding-left: 9px;
    gap: 4px;
}

.field-used::before {
    content: "";
    position: absolute;
    left: 0;
    top: 7px;
    width: 15px;
    height: 15px;
    background: linear-gradient(135deg, #2f6fed 50%, transparent 50%);
}

.field-used::after {
    content: "";
    position: absolute;
    left: 3px;
    top: 10px;
    width: 4px;
    height: 2px;
    border-left: 1px solid #fff;
    border-bottom: 1px solid #fff;
    transform: rotate(-45deg);
}

.panel-grip {
    position: absolute;
    right: -4px;
    top: 304px;
    width: 8px;
    height: 12px;
    background: radial-gradient(circle, #b4b7bf 1px, transparent 1.2px) 0 0 / 4px 5px;
}

.sheet-area {
    width: 433px;
    flex: none;
    padding: 12px 12px 0 11px;
    border-right: 1px solid #e8eaf0;
    display: flex;
    flex-direction: column;
}

.sheet {
    position: relative;
    width: 409px;
    height: 570px;
    border: 1px solid #dcdfe6;
    border-radius: 6px;
    overflow: hidden;
    font-size: 12px;
}

.sheet-row {
    height: 21px;
    display: grid;
    grid-template-columns: 50px 312px 45px;
    line-height: 20px;
}

.sheet-row > div {
    border-right: 1px solid #e6e8ee;
    border-bottom: 1px solid #e6e8ee;
}

.sheet-head {
    height: 19px;
    line-height: 18px;
}

.sheet-head .col-a,
.sheet-head .col-b {
    text-align: center;
    color: #555b66;
}

.row-1 {
    height: 25px;
    line-height: 24px;
}

.row-2 {
    height: 30px;
    line-height: 29px;
}

.row-no {
    background: #f7f8fa;
    color: #555b66;
    text-align: center;
    padding-right: 1px;
}

.corner {
    position: relative;
}

.corner::after {
    content: "";
    position: absolute;
    right: 1px;
    bottom: 1px;
    width: 13px;
    height: 13px;
    background: linear-gradient(135deg, transparent 50%, #c6c8d2 50%);
}

.col-on {
    background: #e3ebf9;
}

.row-no-on {
    background: #e3ebf9;
}

.col-a {
    position: relative;
    padding-left: 4px;
}

.cell-selected {
    background: #e9f0fc;
}

.cell-selected::before {
    content: "";
    position: absolute;
    left: -1px;
    top: -1px;
    right: -1px;
    bottom: -1px;
    border: 2px solid #2f6fed;
}

.cell-selected::after {
    content: "";
    position: absolute;
    right: -3px;
    bottom: -3px;
    width: 4px;
    height: 4px;
    background: #2f6fed;
    border: 1px solid #fff;
    box-sizing: content-box;
    width: 2px;
    height: 2px;
}

.cell-mark {
    position: absolute;
    left: 0;
    top: 0;
    width: 5px;
    height: 5px;
    background: linear-gradient(135deg, #f01c1c 50%, transparent 50%);
}

.cell-mark::after {
    content: "";
    position: absolute;
    left: 2px;
    top: 3px;
    width: 1px;
    height: 9px;
    background: #f08a8a;
}

.cell-title {
    font-size: 11px;
    font-weight: 700;
    color: #1c2340;
}

.cell-desc {
    font-size: 9px;
    color: #1c2340;
}

.scroll-v {
    position: absolute;
    right: 0;
    top: 19px;
    width: 6px;
    height: 180px;
    border-radius: 3px;
    background: #e4e5e8;
}

.scroll-h {
    position: absolute;
    left: 50px;
    bottom: 1px;
    width: 67px;
    height: 6px;
    border-radius: 3px;
    background: #e4e5e8;
}

.sheet-foot {
    display: flex;
    align-items: center;
    justify-content: space-between;
    padding: 8px 8px 0 5px;
}

.zoom-ctrl {
    display: flex;
    align-items: center;
    gap: 9px;
}

.zoom-select {
    width: 80px;
    color: #3a4a6a;
}

/* vertical tabs */
.side-tabs {
    width: 40px;
    flex: none;
    border-right: 1px solid #e8eaf0;
    padding-top: 23px;
}

.expand-icon {
    margin: 0 auto 20px 14px;
}

.side-tab {
    height: 68px;
    display: flex;
    flex-direction: column;
    align-items: center;
    padding-top: 13px;
    gap: 5px;
    font-size: 12px;
    line-height: 12px;
    color: #4b4f5c;
    text-align: center;
}

.side-tab-on {
    background: #ebf2fe;
    color: #2f6fed;
    padding-top: 17px;
}

/* conditional format */
.cond-panel {
    width: 271px;
    flex: none;
    padding: 20px 12px 0;
    border-right: 1px solid #e8eaf0;
}

.cond-title {
    margin: 0;
    font-size: 13px;
    font-weight: 700;
    line-height: 16px;
}

.add-cond {
    margin-top: 16px;
    width: 102px;
    height: 32px;
    display: flex;
    align-items: center;
    justify-content: center;
    gap: 5px;
    background: #fff;
    border: 1px solid #2f6fed;
    border-radius: 6px;
    color: #2f6fed;
    padding: 0;
}

.cond-list {
    margin-top: 12px;
    width: 245px;
    background: #f3f3f4;
    border-radius: 8px;
}

.cond-item {
    height: 33px;
    display: flex;
    align-items: center;
    gap: 10px;
    padding-left: 10px;
    line-height: 20px;
}

.cond-item + .cond-item {
    border-top: 1px solid #e6e6e8;
}

/* data flow */
.flow-panel {
    flex: 1;
    padding: 14px 13px 0 11px;
    display: flex;
    flex-direction: column;
}

.flow-links {
    display: flex;
    align-items: center;
    justify-content: flex-end;
    gap: 8px;
    color: #2f6fed;
    line-height: 20px;
    margin-bottom: 10px;
}

.flow-links-sep {
    width: 1px;
    height: 14px;
    background: #e4e6ec;
}

.flow-node {
    display: flex;
    align-items: center;
    height: 28px;
    border-radius: 10px;
    padding: 0 12px 0 7px;
}

.node-source {
    background: #e9f1fe;
}

.node-source .node-label {
    margin-left: 11px;
}

.node-table {
    height: 26px;
    margin: 0 1px;
    background: #2f6fed;
    border-radius: 6px;
    color: #fff;
    font-weight: 700;
    font-size: 14px;
    box-shadow: 0 0 0 1px #2f6fed, inset 0 0 0 1px #fff;
    padding-left: 6px;
}

.node-table .node-label {
    margin-left: 13px;
}

.node-label {
    line-height: 20px;
    white-space: nowrap;
}

.node-menu {
    margin-left: auto;
}

.flow-line {
    width: 2px;
    height: 28px;
    margin-left: 13px;
    background: #94b6f6;
}

.flow-line-short {
    height: 29px;
}

.flow-add {
    width: 28px;
    height: 28px;
    border-radius: 50%;
    background: #2f6fed;
    display: flex;
    align-items: center;
    justify-content: center;
}

/* toast */
.toast {
    position: absolute;
    left: 667px;
    top: 60px;
    width: 106px;
    height: 42px;
    display: flex;
    align-items: center;
    gap: 5px;
    padding-left: 14px;
    background: #e6f5ea;
    border: 1px solid #a9e4b0;
    border-radius: 2px;
    box-shadow: 0 2px 10px rgba(0, 0, 0, 0.08);
    font-size: 12px;
    line-height: 16px;
    color: #3d4a5c;
    white-space: nowrap;
}
```
